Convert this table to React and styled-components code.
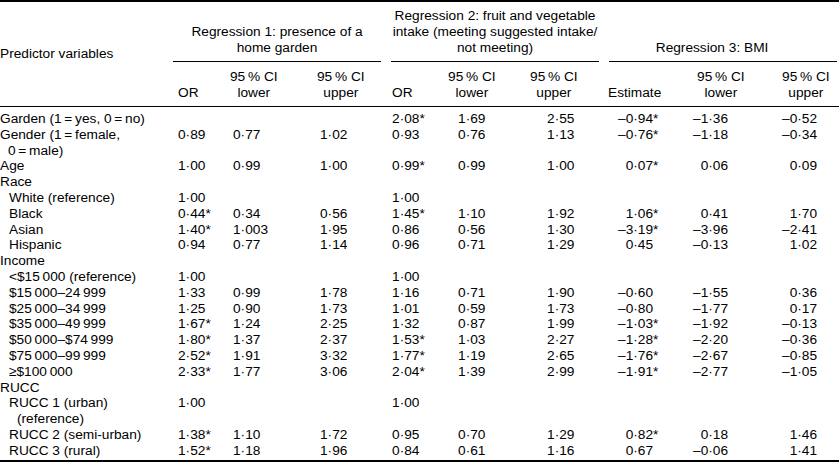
import React from 'react';
import styled, { createGlobalStyle } from 'styled-components';

const Global = createGlobalStyle`
  html, body { margin: 0; padding: 0; background: #fff; overflow: hidden; }
  body { font-family: "Liberation Sans", Arial, Helvetica, sans-serif; color: #000; }
`;

const Table = styled.table`
  width: 839px;
  table-layout: fixed;
  border-collapse: collapse;
  font-size: 13.7px;
  line-height: 15.8px;
  border-top: 2px solid #000;
  border-bottom: 2px solid #000;
  tbody tr:first-child td { padding-top: 4px; }
  tbody tr:last-child td { padding-bottom: 1px; }
`;

const Col = styled.col`
  width: ${p => p.$w}px;
`;

const StubHead = styled.th`
  font-weight: normal;
  text-align: left;
  vertical-align: middle;
  padding: 0;
  border-bottom: 1px solid #000;
`;

const GroupHead = styled.th`
  font-weight: normal;
  vertical-align: bottom;
  padding: 6px 0 0;
`;

const GroupLabel = styled.div`
  margin: 0 ${p => p.$mr}px 0 5px;
  padding: 0 ${p => p.$pr || 0}px 6px 0;
  border-bottom: 1px solid #000;
  text-align: center;
`;

const ColHead = styled.th`
  font-weight: normal;
  text-align: left;
  vertical-align: bottom;
  padding: 7px 0 5px ${p => p.$pl}px;
  border-bottom: 1px solid #000;
  white-space: nowrap;
`;

const HeadText = styled.span`
  display: inline-block;
  text-align: center;
`;

const LabelCell = styled.td`
  vertical-align: top;
  padding: 0 0 0 ${p => p.$level * 9}px;
  white-space: nowrap;
`;

const Cont = styled.span`
  display: block;
  padding-left: 8px;
`;

const NumCell = styled.td`
  vertical-align: top;
  white-space: nowrap;
  text-align: ${p => p.$align};
  padding: 0 ${p => p.$pr || 0}px 0 ${p => p.$pl || 0}px;
`;

const Star = styled.span`
  display: inline-block;
  width: 7px;
  text-align: left;
`;

const T = '\u2009';

const cols = [
  { w: 57, align: 'left', pl: 10, hpl: 10, head: ['OR'] },
  { w: 87, align: 'left', pl: 8, hpl: 5, head: [`95${T}% CI`, 'lower'] },
  { w: 74, align: 'left', pl: 8, hpl: 5, head: [`95${T}% CI`, 'upper'] },
  { w: 59, align: 'left', pl: 6, hpl: 6, head: ['OR'] },
  { w: 80, align: 'left', pl: 13, hpl: 3, head: [`95${T}% CI`, 'lower'] },
  { w: 79, align: 'left', pl: 22, hpl: 5, head: [`95${T}% CI`, 'upper'] },
  { w: 76, align: 'right', pr: 20, star: true, hpl: 4, head: ['Estimate'] },
  { w: 80, align: 'right', pr: 32, hpl: 17, head: [`95${T}% CI`, 'lower'] },
  { w: 79, align: 'right', pr: 22, hpl: 22, head: [`95${T}% CI`, 'upper'] },
];

const groups = [
  { lines: ['Regression 1: presence of a', 'home garden'], mr: 5 },
  { lines: ['Regression 2: fruit and vegetable', 'intake (meeting suggested intake/', 'not meeting)'], mr: 5 },
  { lines: ['Regression 3: BMI'], mr: 2, pr: 22 },
];

const E = [];
const rows = [
  { label: [`Garden (1${T}=${T}yes, 0${T}=${T}no)`], level: 0, v: ['', '', '', '2·08*', '1·69', '2·55', '–0·94*', '–1·36', '–0·52'] },
  { label: [`Gender (1${T}=${T}female,`, `0${T}=${T}male)`], level: 0, v: ['0·89', '0·77', '1·02', '0·93', '0·76', '1·13', '–0·76*', '–1·18', '–0·34'] },
  { label: ['Age'], level: 0, v: ['1·00', '0·99', '1·00', '0·99*', '0·99', '1·00', '0·07*', '0·06', '0·09'] },
  { label: ['Race'], level: 0, v: E },
  { label: ['White (reference)'], level: 1, v: ['1·00', '', '', '1·00'] },
  { label: ['Black'], level: 1, v: ['0·44*', '0·34', '0·56', '1·45*', '1·10', '1·92', '1·06*', '0·41', '1·70'] },
  { label: ['Asian'], level: 1, v: ['1·40*', '1·003', '1·95', '0·86', '0·56', '1·30', '–3·19*', '–3·96', '–2·41'] },
  { label: ['Hispanic'], level: 1, v: ['0·94', '0·77', '1·14', '0·96', '0·71', '1·29', '0·45', '–0·13', '1·02'] },
  { label: ['Income'], level: 0, v: E },
  { label: [`<$15${T}000 (reference)`], level: 1, v: ['1·00', '', '', '1·00'] },
  { label: [`$15${T}000–24${T}999`], level: 1, v: ['1·33', '0·99', '1·78', '1·16', '0·71', '1·90', '–0·60', '–1·55', '0·36'] },
  { label: [`$25${T}000–34${T}999`], level: 1, v: ['1·25', '0·90', '1·73', '1·01', '0·59', '1·73', '–0·80', '–1·77', '0·17'] },
  { label: [`$35${T}000–49${T}999`], level: 1, v: ['1·67*', '1·24', '2·25', '1·32', '0·87', '1·99', '–1·03*', '–1·92', '–0·13'] },
  { label: [`$50${T}000–$74${T}999`], level: 1, v: ['1·80*', '1·37', '2·37', '1·53*', '1·03', '2·27', '–1·28*', '–2·20', '–0·36'] },
  { label: [`$75${T}000–99${T}999`], level: 1, v: ['2·52*', '1·91', '3·32', '1·77*', '1·19', '2·65', '–1·76*', '–2·67', '–0·85'] },
  { label: [`≥$100${T}000`], level: 1, v: ['2·33*', '1·77', '3·06', '2·04*', '1·39', '2·99', '–1·91*', '–2·77', '–1·05'] },
  { label: ['RUCC'], level: 0, v: E },
  { label: ['RUCC 1 (urban)', '(reference)'], level: 1, v: ['1·00', '', '', '1·00'] },
  { label: ['RUCC 2 (semi-urban)'], level: 1, v: ['1·38*', '1·10', '1·72', '0·95', '0·70', '1·29', '0·82*', '0·18', '1·46'] },
  { label: ['RUCC 3 (rural)'], level: 1, v: ['1·52*', '1·18', '1·96', '0·84', '0·61', '1·16', '0·67', '–0·06', '1·41'] },
];

function Value({ text, star }) {
  if (!star || !text) return text || null;
  const has = text.endsWith('*');
  return (
    <>
      {has ? text.slice(0, -1) : text}
      <Star>{has ? '*' : ''}</Star>
    </>
  );
}

export default function App() {
  return (
    <>
      <Global />
      <Table>
        <colgroup>
          <Col $w={168} />
          {cols.map((c, i) => <Col key={i} $w={c.w} />)}
        </colgroup>
        <thead>
          <tr>
            <StubHead rowSpan={2}>Predictor variables</StubHead>
            {groups.map((g, i) => (
              <GroupHead key={i} colSpan={3}>
                <GroupLabel $mr={g.mr} $pr={g.pr}>
                  {g.lines.map((l, j) => <div key={j}>{l}</div>)}
                </GroupLabel>
              </GroupHead>
            ))}
          </tr>
          <tr>
            {cols.map((c, i) => (
              <ColHead key={i} $pl={c.hpl}>
                <HeadText>
                  {c.head.map((h, j) => <div key={j}>{h}</div>)}
                </HeadText>
              </ColHead>
            ))}
          </tr>
        </thead>
        <tbody>
          {rows.map((r, i) => (
            <tr key={i}>
              <LabelCell $level={r.level}>
                {r.label[0]}
                {r.label.slice(1).map((l, j) => <Cont key={j}>{l}</Cont>)}
              </LabelCell>
              {cols.map((c, k) => (
                <NumCell key={k} $align={c.align} $pl={c.pl} $pr={c.pr}>
                  <Value text={r.v[k]} star={c.star} />
                </NumCell>
              ))}
            </tr>
          ))}
        </tbody>
      </Table>
    </>
  );
}
